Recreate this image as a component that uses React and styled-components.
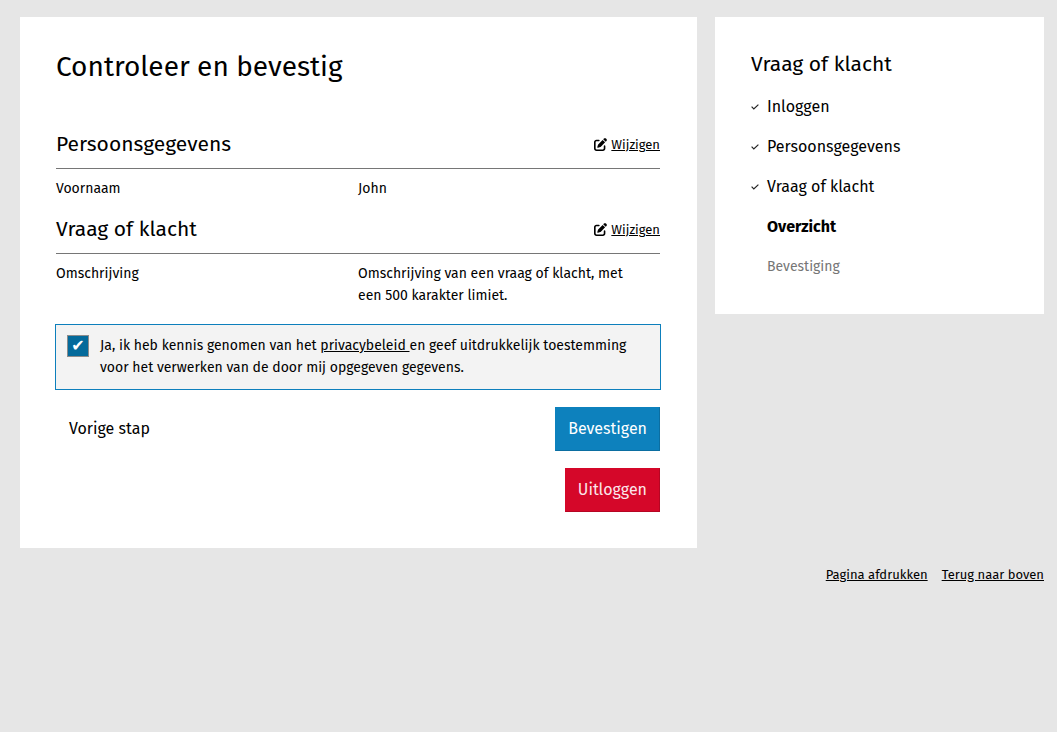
import React from "react";
import styled, { createGlobalStyle, css } from "styled-components";
import { FaPenToSquare } from "react-icons/fa6";

const GlobalStyle = createGlobalStyle`
  *, *::before, *::after { box-sizing: border-box; }
  body {
    margin: 0;
    background: #e6e6e6;
    color: #000;
    font-family: "Fira Sans", "Noto Sans", sans-serif;
    font-size: 14px;
    line-height: 22px;
  }
`;

const Page = styled.div`
  padding: 17px 13px 16px 20px;
`;

const Columns = styled.div`
  display: grid;
  grid-template-columns: 677fr 329fr;
  gap: 18px;
  align-items: start;
`;

const Card = styled.section`
  background: #fff;
  padding: 36px 37px 36px 36px;
`;

const Title = styled.h1`
  margin: 0 0 49px;
  font-size: 28px;
  font-weight: 400;
  line-height: 28px;
`;

const Heading = styled.h2`
  margin: 0;
  font-size: 21px;
  font-weight: 400;
  line-height: 22px;
`;

const Summary = styled.section`
  & + & { margin-top: 15px; }
`;

const SummaryHeader = styled.header`
  display: flex;
  align-items: baseline;
  justify-content: space-between;
  padding: 3px 0 13px;
  border-bottom: 1px solid #767676;
`;

const TextLink = styled.a`
  display: inline-flex;
  align-items: center;
  gap: 4px;
  color: #000;
  font-size: 13px;
  line-height: 20px;
  text-decoration: underline;
`;

const DataList = styled.dl`
  display: grid;
  grid-template-columns: 1fr 1fr;
  margin: 0;
  padding-top: 9px;
`;

const Term = styled.dt`
  margin: 0;
`;

const Value = styled.dd`
  margin: 0;
  padding-right: 16px;
`;

const Consent = styled.div`
  display: flex;
  align-items: flex-start;
  gap: 11px;
  margin: 17px -1px 17px;
  padding: 10px 11px;
  background: #f3f3f3;
  border: 1px solid #0d7fbc;
`;

const Checkbox = styled.input`
  appearance: none;
  display: grid;
  place-items: center;
  flex: none;
  width: 22px;
  height: 22px;
  margin: 0;
  border: 1px solid #8c8c8c;
  background: #fff;

  &:checked { background: #046a9b; }
  &:checked::before {
    content: "✔";
    color: #fff;
    font: 16px/20px "DejaVu Sans", sans-serif;
  }
`;

const InlineLink = styled.a`
  color: #000;
`;

const Actions = styled.div`
  display: flex;
  flex-wrap: wrap;
  justify-content: ${(p) => (p.$end ? "flex-end" : "space-between")};

  & + & { margin-top: 17px; }
`;

const variants = {
  primary: css`
    background: #0d81bd;
    color: #fff;
    border-color: #0d81bd #0b6ea1 #0b6ea1 #0d81bd;
  `,
  danger: css`
    background: #d50729;
    color: #fbe6ea;
    border-color: #d50729 #b50623 #b50623 #d50729;
  `,
  plain: css`
    background: transparent;
    color: #000;
    border-color: transparent;
  `,
};

const Button = styled.button`
  padding: 10px 12px;
  border: 1px solid;
  font-family: inherit;
  font-size: 16px;
  line-height: 22px;
  ${(p) => variants[p.$variant]}
`;

const Steps = styled.ol`
  display: grid;
  gap: 18px;
  margin: 0;
  padding: 21px 0 0;
  list-style: none;
`;

const Step = styled.li`
  display: grid;
  grid-template-columns: 8px 1fr;
  align-items: center;
  gap: 8px;
  font-size: ${(p) => (p.$state === "todo" ? "14px" : "16px")};
  font-weight: ${(p) => (p.$state === "current" ? 700 : 400)};
  color: ${(p) => (p.$state === "todo" ? "#767676" : "#000")};
`;

const StepLink = styled.a`
  color: inherit;
  text-decoration: none;
`;

const StepMark = styled.span`
  display: flex;
`;

const PageLinks = styled.nav`
  display: flex;
  justify-content: flex-end;
  gap: 14px;
  padding-top: 17px;
`;

const CheckIcon = () => (
  <svg width="8" height="6" viewBox="0 0 8 6" fill="none" stroke="#222" strokeWidth="1.2" aria-hidden="true">
    <path d="M0.6 2.7 2.8 4.9 7.4 0.6" />
  </svg>
);

const summaries = [
  { title: "Persoonsgegevens", label: "Voornaam", value: "John" },
  {
    title: "Vraag of klacht",
    label: "Omschrijving",
    value: "Omschrijving van een vraag of klacht, met een 500 karakter limiet.",
  },
];

const steps = [
  { name: "Inloggen", state: "done" },
  { name: "Persoonsgegevens", state: "done" },
  { name: "Vraag of klacht", state: "done" },
  { name: "Overzicht", state: "current" },
  { name: "Bevestiging", state: "todo" },
];

export default function App() {
  return (
    <Page id="top">
      <GlobalStyle />
      <Columns>
        <Card as="main">
          <Title>Controleer en bevestig</Title>
          {summaries.map((item) => (
            <Summary key={item.title}>
              <SummaryHeader>
                <Heading>{item.title}</Heading>
                <TextLink href="#wijzigen">
                  <FaPenToSquare size={13} aria-hidden="true" />
                  <span>Wijzigen</span>
                </TextLink>
              </SummaryHeader>
              <DataList>
                <Term>{item.label}</Term>
                <Value>{item.value}</Value>
              </DataList>
            </Summary>
          ))}
          <Consent>
            <Checkbox type="checkbox" id="privacy" defaultChecked />
            <label htmlFor="privacy">
              Ja, ik heb kennis genomen van het <InlineLink href="#privacy">privacybeleid </InlineLink>
              en geef uitdrukkelijk toestemming voor het verwerken van de door mij opgegeven gegevens.
            </label>
          </Consent>
          <Actions>
            <Button type="button" $variant="plain">Vorige stap</Button>
            <Button type="submit" $variant="primary">Bevestigen</Button>
          </Actions>
          <Actions $end>
            <Button type="button" $variant="danger">Uitloggen</Button>
          </Actions>
        </Card>
        <Card as="aside">
          <Heading>Vraag of klacht</Heading>
          <Steps>
            {steps.map((step) => (
              <Step key={step.name} $state={step.state}>
                <StepMark>{step.state === "done" && <CheckIcon />}</StepMark>
                {step.state === "todo" ? (
                  <span>{step.name}</span>
                ) : (
                  <StepLink href="#stap">{step.name}</StepLink>
                )}
              </Step>
            ))}
          </Steps>
        </Card>
      </Columns>
      <PageLinks>
        <TextLink href="#afdrukken">Pagina afdrukken</TextLink>
        <TextLink href="#top">Terug naar boven</TextLink>
      </PageLinks>
    </Page>
  );
}
